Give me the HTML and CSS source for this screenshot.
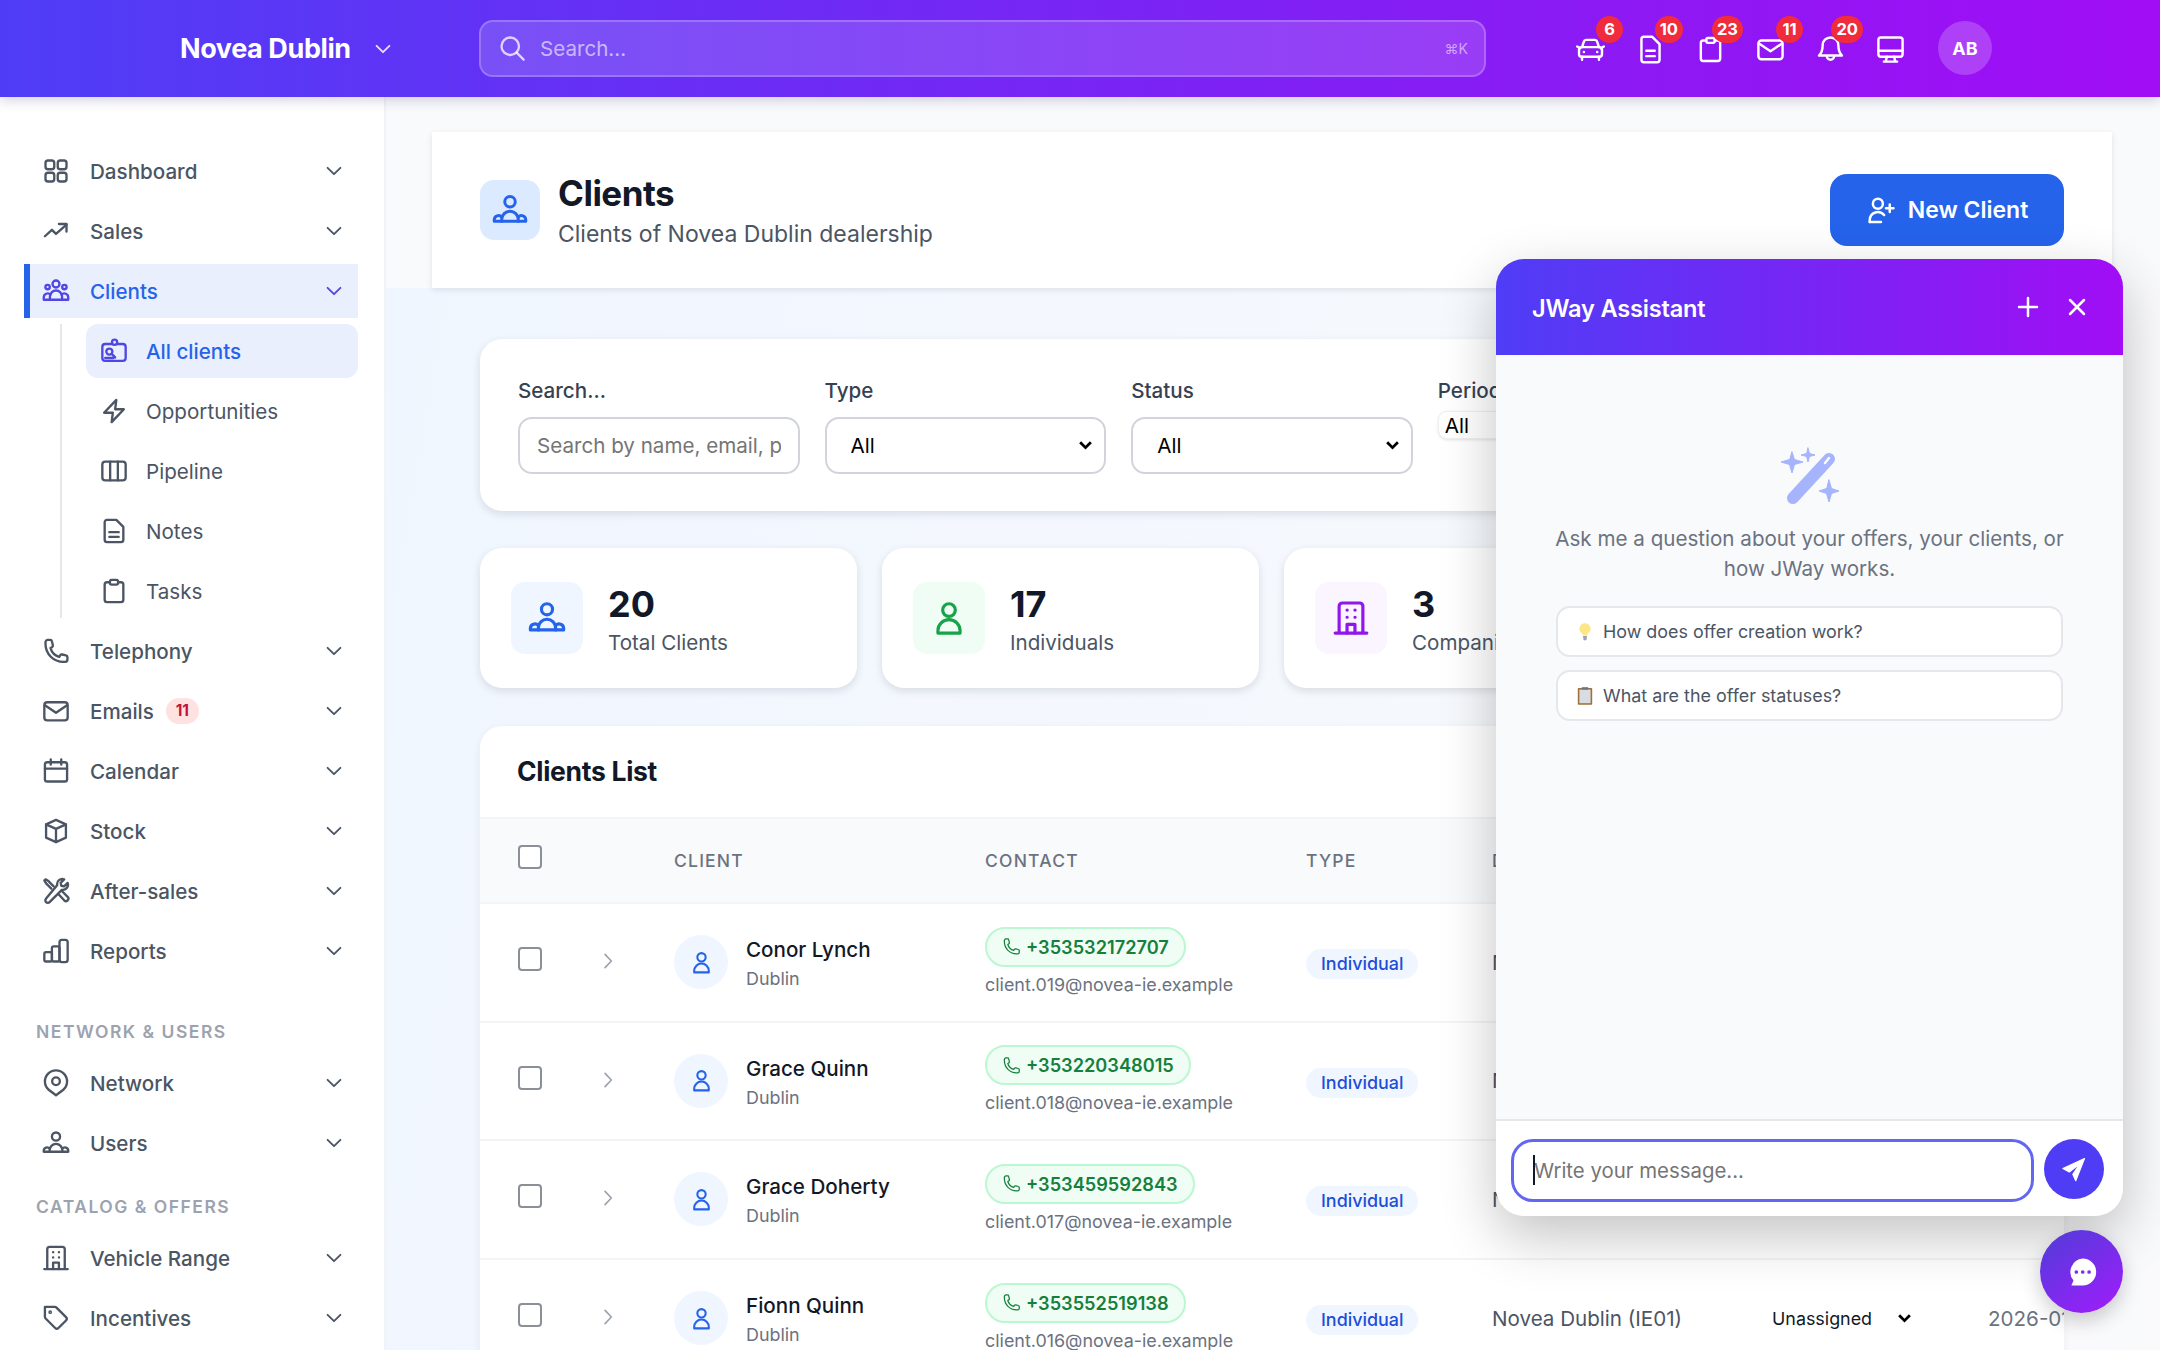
FILE: index.html

```html
<!DOCTYPE html>
<html lang="en">
<head>
    <meta charset="UTF-8">
    <meta name="viewport" content="width=device-width, initial-scale=1.0">
    <title>Clients - Novea Dublin</title>
    <link rel="stylesheet" href="styles.css">
</head>
<body>
    <svg class="sprite" xmlns="http://www.w3.org/2000/svg">
        <symbol id="i-chevron" viewBox="0 0 24 24"><path d="M5 8.500l7 7 7-7"/></symbol>
        <symbol id="i-search" viewBox="0 0 24 24"><circle cx="10.500" cy="10.500" r="7.500"/><path d="M16 16l6 6"/></symbol>
        <symbol id="i-dashboard" viewBox="0 0 24 24"><rect x="3" y="3" width="7.500" height="7.500" rx="2.200"/><rect x="13.500" y="3" width="7.500" height="7.500" rx="2.200"/><rect x="3" y="13.500" width="7.500" height="7.500" rx="2.200"/><rect x="13.500" y="13.500" width="7.500" height="7.500" rx="2.200"/></symbol>
        <symbol id="i-sales" viewBox="0 0 24 24"><path d="M2.500 16.500l6-5.500 3.500 3.500 9-8"/><path d="M14.500 6h6.500v6.500"/></symbol>
        <symbol id="i-clients" viewBox="0 0 24 24"><circle cx="12" cy="6" r="3"/><circle cx="4.800" cy="8.600" r="1.900"/><circle cx="19.200" cy="8.600" r="1.900"/><path d="M6.800 19.500v-2.700a5.200 5.200 0 0 1 10.400 0v2.700z"/><path d="M6.800 19.500H1.500v-2a3.400 3.400 0 0 1 5.800-2.400M17.200 19.500h5.300v-2a3.400 3.400 0 0 0-5.800-2.400"/></symbol>
        <symbol id="i-allclients" viewBox="0 0 24 24"><rect x="2" y="6" width="20" height="14.500" rx="2.500"/><circle cx="12.500" cy="4.500" r="2.200" fill="#e8effc"/><circle cx="8" cy="12.500" r="2.600"/><path d="M10 14.500l3 3M4.500 18h7"/></symbol>
        <symbol id="i-bolt" viewBox="0 0 24 24"><path d="M14 2.500L3.500 13.500H11l-1 8 10.500-11H13z"/></symbol>
        <symbol id="i-pipeline" viewBox="0 0 24 24"><rect x="2" y="4" width="20" height="16" rx="2.500"/><path d="M8.700 4v16M15.300 4v16"/></symbol>
        <symbol id="i-notes" viewBox="0 0 24 24"><path d="M6 2.500h8l6 6v11a2 2 0 0 1-2 2H6a2 2 0 0 1-2-2v-15a2 2 0 0 1 2-2z"/><path d="M8 13h8M8 17h8"/></symbol>
        <symbol id="i-tasks" viewBox="0 0 24 24"><path d="M8.500 4.500H6a2 2 0 0 0-2 2v13a2 2 0 0 0 2 2h12a2 2 0 0 0 2-2v-13a2 2 0 0 0-2-2h-2.500"/><rect x="8.500" y="2.500" width="7" height="4" rx="1.500"/></symbol>
        <symbol id="i-phone" viewBox="0 0 24 24"><path d="M3 4.500A2 2 0 0 1 5 2.500h2a1.500 1.500 0 0 1 1.500 1.200l.8 3.400a1.500 1.500 0 0 1-.7 1.600l-1.300.8a11 11 0 0 0 7.500 7.500l.8-1.300a1.500 1.500 0 0 1 1.600-.7l3.400.8a1.500 1.500 0 0 1 1.200 1.500v2a2 2 0 0 1-2 2h-1C9.800 21.500 3 14.500 3 5.800z"/></symbol>
        <symbol id="i-mail" viewBox="0 0 24 24"><rect x="2" y="4.500" width="20" height="15.500" rx="2.500"/><path d="M2.500 7l9.500 6.500L21.500 7"/></symbol>
        <symbol id="i-calendar" viewBox="0 0 24 24"><rect x="2.500" y="4.500" width="19" height="16.500" rx="2"/><path d="M2.500 10h19M7.500 2v4.500M16.500 2v4.500"/></symbol>
        <symbol id="i-stock" viewBox="0 0 24 24"><path d="M12 2.500l8.500 3.800v11.400L12 21.500l-8.500-3.800V6.300z"/><path d="M3.500 6.300l8.500 3.900 8.500-3.900M12 10.200v11.300"/></symbol>
        <symbol id="i-tools" viewBox="0 0 24 24"><path d="M3.500 20.500a2.100 2.100 0 0 0 3 0L17 10a4.500 4.500 0 0 0 5-6l-3 3-2.500-.5L16 4l3-3a4.500 4.500 0 0 0-6 5L3.500 17.500a2.100 2.100 0 0 0 0 3z" transform="translate(0 1)"/><path d="M10 8L5.500 3.500 3 2 2 3l1.500 2.500L8 10M14 14.500l5 5.500a2 2 0 0 0 3-3l-5-5"/></symbol>
        <symbol id="i-reports" viewBox="0 0 24 24"><rect x="2" y="13" width="6.500" height="8" rx="1.500"/><rect x="8.500" y="8" width="6.500" height="13" rx="1.500"/><rect x="15" y="2.500" width="7" height="19" rx="2"/></symbol>
        <symbol id="i-pin" viewBox="0 0 24 24"><path d="M12 22l-6-4.500A9.500 9.500 0 1 1 18 17.500z" transform="translate(0 .5)"/><circle cx="12" cy="10.500" r="3.300"/></symbol>
        <symbol id="i-users" viewBox="0 0 24 24"><circle cx="12" cy="6.500" r="3.500"/><path d="M6.500 19.500v-1.200a5.500 5.500 0 0 1 11 0v1.200z"/><path d="M6.500 19.500H1.500v-1a2.800 2.800 0 0 1 5-1.700M17.500 19.500h5v-1a2.800 2.800 0 0 0-5-1.700"/></symbol>
        <symbol id="i-building" viewBox="0 0 24 24"><path d="M2 21.500h20M4.500 21.500V4.500a2 2 0 0 1 2-2h11a2 2 0 0 1 2 2v17"/><path d="M9.500 21.500v-5.500h5v5.500M9.500 7h.1M14.500 7h.1M9.500 11.500h.1M14.500 11.500h.1"/></symbol>
        <symbol id="i-tag" viewBox="0 0 24 24"><path d="M3 3h8.500a2 2 0 0 1 1.400.6l8.200 8.200a2 2 0 0 1 0 2.800l-6.500 6.500a2 2 0 0 1-2.800 0L3.600 12.900A2 2 0 0 1 3 11.500V5z" transform="translate(-.5 -.5)"/><circle cx="7" cy="7" r=".6"/></symbol>
        <symbol id="i-car" viewBox="0 0 24 24"><path d="M5 10l1.500-4.500A2 2 0 0 1 8.400 4h7.200a2 2 0 0 1 1.900 1.500L19 10"/><rect x="2.500" y="10" width="19" height="8" rx="2"/><path d="M5 18v2.500M19 18v2.500M1 9.500l2.500 1.500M23 9.500L20.500 11M6.500 14h.1M17.500 14h.1"/></symbol>
        <symbol id="i-doc" viewBox="0 0 24 24"><path d="M7 1.500h7l6 6v13a2 2 0 0 1-2 2H7a2 2 0 0 1-2-2v-17a2 2 0 0 1 2-2z" transform="translate(-.5 0)"/><path d="M8.500 13h7M8.500 17.500h7"/></symbol>
        <symbol id="i-bell" viewBox="0 0 24 24"><path d="M12 2a6.500 6.500 0 0 0-6.500 6.500c0 5-1.500 7-3 8.500h19c-1.500-1.500-3-3.500-3-8.500A6.500 6.500 0 0 0 12 2z"/><path d="M9 17.500a3 3 0 0 0 6 0"/></symbol>
        <symbol id="i-monitor" viewBox="0 0 24 24"><rect x="2" y="2" width="20" height="16" rx="2"/><path d="M2 13h20M9 18l-1 4M15 18l1 4M6.500 22h11"/></symbol>
        <symbol id="i-user" viewBox="0 0 24 24"><circle cx="12" cy="7" r="4"/><path d="M5 21.500v-1.500a7 7 0 0 1 14 0v1.500z"/></symbol>
        <symbol id="i-useradd" viewBox="0 0 24 24"><circle cx="9.500" cy="7" r="4"/><path d="M3 21.500v-1.500a6.500 6.500 0 0 1 11.500-4"/><path d="M3 21.500h9M19 7.500v6M16 10.500h6"/></symbol>
        <symbol id="i-right" viewBox="0 0 24 24"><path d="M8.500 4l7.500 8-7.500 8"/></symbol>
    </svg>

    <header class="topbar">
        <div class="brand">
            <span class="brand-name">Novea Dublin</span>
            <svg class="brand-chevron"><use href="#i-chevron"/></svg>
        </div>
        <div class="top-search">
            <svg class="top-search-icon"><use href="#i-search"/></svg>
            <span class="top-search-text">Search...</span>
            <span class="top-search-key">⌘K</span>
        </div>
        <div class="top-icons">
            <div class="top-icon"><svg><use href="#i-car"/></svg><span class="top-badge">6</span></div>
            <div class="top-icon"><svg><use href="#i-doc"/></svg><span class="top-badge">10</span></div>
            <div class="top-icon"><svg><use href="#i-tasks"/></svg><span class="top-badge">23</span></div>
            <div class="top-icon"><svg><use href="#i-mail"/></svg><span class="top-badge">11</span></div>
            <div class="top-icon"><svg><use href="#i-bell"/></svg><span class="top-badge">20</span></div>
            <div class="top-icon"><svg><use href="#i-monitor"/></svg></div>
        </div>
        <div class="avatar">AB</div>
    </header>

    <div class="layout">
        <aside class="sidebar">
            <a class="nav-item"><svg class="nav-icon"><use href="#i-dashboard"/></svg><span>Dashboard</span><svg class="nav-chevron"><use href="#i-chevron"/></svg></a>
            <a class="nav-item"><svg class="nav-icon"><use href="#i-sales"/></svg><span>Sales</span><svg class="nav-chevron"><use href="#i-chevron"/></svg></a>
            <a class="nav-item active"><svg class="nav-icon"><use href="#i-clients"/></svg><span>Clients</span><svg class="nav-chevron"><use href="#i-chevron"/></svg></a>
            <div class="subnav">
                <a class="sub-item active"><svg class="nav-icon"><use href="#i-allclients"/></svg><span>All clients</span></a>
                <a class="sub-item"><svg class="nav-icon"><use href="#i-bolt"/></svg><span>Opportunities</span></a>
                <a class="sub-item"><svg class="nav-icon"><use href="#i-pipeline"/></svg><span>Pipeline</span></a>
                <a class="sub-item"><svg class="nav-icon"><use href="#i-notes"/></svg><span>Notes</span></a>
                <a class="sub-item"><svg class="nav-icon"><use href="#i-tasks"/></svg><span>Tasks</span></a>
            </div>
            <a class="nav-item"><svg class="nav-icon"><use href="#i-phone"/></svg><span>Telephony</span><svg class="nav-chevron"><use href="#i-chevron"/></svg></a>
            <a class="nav-item"><svg class="nav-icon"><use href="#i-mail"/></svg><span>Emails</span><span class="nav-badge">11</span><svg class="nav-chevron"><use href="#i-chevron"/></svg></a>
            <a class="nav-item"><svg class="nav-icon"><use href="#i-calendar"/></svg><span>Calendar</span><svg class="nav-chevron"><use href="#i-chevron"/></svg></a>
            <a class="nav-item"><svg class="nav-icon"><use href="#i-stock"/></svg><span>Stock</span><svg class="nav-chevron"><use href="#i-chevron"/></svg></a>
            <a class="nav-item"><svg class="nav-icon"><use href="#i-tools"/></svg><span>After-sales</span><svg class="nav-chevron"><use href="#i-chevron"/></svg></a>
            <a class="nav-item"><svg class="nav-icon"><use href="#i-reports"/></svg><span>Reports</span><svg class="nav-chevron"><use href="#i-chevron"/></svg></a>
            <div class="nav-section first">NETWORK &amp; USERS</div>
            <a class="nav-item"><svg class="nav-icon"><use href="#i-pin"/></svg><span>Network</span><svg class="nav-chevron"><use href="#i-chevron"/></svg></a>
            <a class="nav-item"><svg class="nav-icon"><use href="#i-users"/></svg><span>Users</span><svg class="nav-chevron"><use href="#i-chevron"/></svg></a>
            <div class="nav-section">CATALOG &amp; OFFERS</div>
            <a class="nav-item"><svg class="nav-icon"><use href="#i-building"/></svg><span>Vehicle Range</span><svg class="nav-chevron"><use href="#i-chevron"/></svg></a>
            <a class="nav-item"><svg class="nav-icon"><use href="#i-tag"/></svg><span>Incentives</span><svg class="nav-chevron"><use href="#i-chevron"/></svg></a>
        </aside>

        <main class="main">
            <section class="page-head">
                <div class="page-icon"><svg><use href="#i-users"/></svg></div>
                <div class="page-titles">
                    <h1>Clients</h1>
                    <p>Clients of Novea Dublin dealership</p>
                </div>
                <button class="new-btn"><svg><use href="#i-useradd"/></svg>New Client</button>
            </section>

            <div class="content">
                <section class="filters">
                    <div class="field">
                        <label>Search...</label>
                        <input class="field-input" type="text" placeholder="Search by name, email, phone...">
                    </div>
                    <div class="field">
                        <label>Type</label>
                        <select class="field-input"><option>All</option></select>
                    </div>
                    <div class="field">
                        <label>Status</label>
                        <select class="field-input"><option>All</option></select>
                    </div>
                    <div class="field">
                        <label>Period</label>
                        <select class="field-small"><option>All</option></select>
                    </div>
                </section>

                <section class="stats">
                    <div class="stat">
                        <div class="stat-icon blue"><svg><use href="#i-users"/></svg></div>
                        <div><div class="stat-value">20</div><div class="stat-label">Total Clients</div></div>
                    </div>
                    <div class="stat">
                        <div class="stat-icon green"><svg><use href="#i-user"/></svg></div>
                        <div><div class="stat-value">17</div><div class="stat-label">Individuals</div></div>
                    </div>
                    <div class="stat">
                        <div class="stat-icon purple"><svg><use href="#i-building"/></svg></div>
                        <div><div class="stat-value">3</div><div class="stat-label">Companies</div></div>
                    </div>
                </section>

                <section class="list-card">
                    <h2>Clients List</h2>
                    <table class="clients">
                        <colgroup>
                            <col class="c-check"><col class="c-expand"><col class="c-client"><col class="c-contact"><col class="c-type"><col class="c-dealer"><col class="c-owner"><col class="c-date">
                        </colgroup>
                        <thead>
                            <tr>
                                <th><input class="check head-check" type="checkbox"></th>
                                <th></th>
                                <th>CLIENT</th>
                                <th>CONTACT</th>
                                <th>TYPE</th>
                                <th>DEALERSHIP</th>
                                <th>OWNER</th>
                                <th>DATE</th>
                            </tr>
                        </thead>
                        <tbody>
                            <tr>
                                <td><input class="check" type="checkbox"></td>
                                <td><svg class="row-chevron"><use href="#i-right"/></svg></td>
                                <td><div class="client"><div class="client-avatar"><svg><use href="#i-user"/></svg></div><div><div class="client-name">Conor Lynch</div><div class="client-city">Dublin</div></div></div></td>
                                <td><span class="phone"><svg><use href="#i-phone"/></svg>+353532172707</span><div class="email">client.019@novea-ie.example</div></td>
                                <td><span class="type-pill">Individual</span></td>
                                <td class="dealer">Novea Dublin (IE01)</td>
                                <td><select class="owner"><option>Unassigned</option></select></td>
                                <td class="date">2026-01-14</td>
                            </tr>
                            <tr>
                                <td><input class="check" type="checkbox"></td>
                                <td><svg class="row-chevron"><use href="#i-right"/></svg></td>
                                <td><div class="client"><div class="client-avatar"><svg><use href="#i-user"/></svg></div><div><div class="client-name">Grace Quinn</div><div class="client-city">Dublin</div></div></div></td>
                                <td><span class="phone"><svg><use href="#i-phone"/></svg>+353220348015</span><div class="email">client.018@novea-ie.example</div></td>
                                <td><span class="type-pill">Individual</span></td>
                                <td class="dealer">Novea Dublin (IE01)</td>
                                <td><select class="owner"><option>Unassigned</option></select></td>
                                <td class="date">2026-01-14</td>
                            </tr>
                            <tr>
                                <td><input class="check" type="checkbox"></td>
                                <td><svg class="row-chevron"><use href="#i-right"/></svg></td>
                                <td><div class="client"><div class="client-avatar"><svg><use href="#i-user"/></svg></div><div><div class="client-name">Grace Doherty</div><div class="client-city">Dublin</div></div></div></td>
                                <td><span class="phone"><svg><use href="#i-phone"/></svg>+353459592843</span><div class="email">client.017@novea-ie.example</div></td>
                                <td><span class="type-pill">Individual</span></td>
                                <td class="dealer">Novea Dublin (IE01)</td>
                                <td><select class="owner"><option>Unassigned</option></select></td>
                                <td class="date">2026-01-14</td>
                            </tr>
                            <tr>
                                <td><input class="check" type="checkbox"></td>
                                <td><svg class="row-chevron"><use href="#i-right"/></svg></td>
                                <td><div class="client"><div class="client-avatar"><svg><use href="#i-user"/></svg></div><div><div class="client-name">Fionn Quinn</div><div class="client-city">Dublin</div></div></div></td>
                                <td><span class="phone"><svg><use href="#i-phone"/></svg>+353552519138</span><div class="email">client.016@novea-ie.example</div></td>
                                <td><span class="type-pill">Individual</span></td>
                                <td class="dealer">Novea Dublin (IE01)</td>
                                <td><select class="owner"><option>Unassigned</option></select></td>
                                <td class="date">2026-01-14</td>
                            </tr>
                        </tbody>
                    </table>
                </section>
            </div>
        </main>
    </div>

    <!-- assistant panel, sits over the page -->
    <section class="assistant">
        <div class="assistant-head">
            <span class="assistant-title">JWay Assistant</span>
            <svg class="assistant-btn" viewBox="0 0 24 24"><path d="M12 3v18M3 12h18"/></svg>
            <svg class="assistant-btn close" viewBox="0 0 24 24"><path d="M5 5l14 14M19 5L5 19"/></svg>
        </div>
        <div class="assistant-body">
            <svg class="wand" viewBox="0 0 60 60">
                <line class="wand-stick" x1="13" y1="51" x2="49" y2="12"/>
                <line class="wand-slot" x1="49" y1="11" x2="45" y2="16"/>
                <path class="wand-star" d="M12 5L14.500 12.500L23 15L14.500 17.500L12 26L9.500 17.500L1 15L9.500 12.500Z"/>
                <path class="wand-star" d="M28 1L29.500 6.500L35 8L29.500 9.500L28 15L26.500 9.500L21 8L26.500 6.500Z"/>
                <path class="wand-star" d="M49 33L51.500 41.500L59 44L51.500 46.500L49 55L46.500 46.500L39 44L46.500 41.500Z"/>
            </svg>
            <p class="assistant-intro">Ask me a question about your offers, your clients, or how JWay works.</p>
            <button class="suggest">
                <svg viewBox="0 0 20 24"><path d="M10 1a7 7 0 0 0-4 12.700c.8.700 1.200 1.500 1.300 2.800h5.400c.1-1.300.5-2.100 1.300-2.800A7 7 0 0 0 10 1z" fill="#fde68a"/><path d="M7.500 17h5l-.5 4-2 2-2-2z" fill="#9ca3af"/></svg>
                How does offer creation work?
            </button>
            <button class="suggest">
                <svg viewBox="0 0 20 24"><rect x="1" y="2" width="18" height="21" rx="1" fill="#a0703c"/><rect x="3" y="4" width="14" height="17" fill="#d9dde2"/><rect x="6" y="1" width="8" height="3" fill="#6b7280"/></svg>
                What are the offer statuses?
            </button>
        </div>
        <div class="assistant-foot">
            <div class="message-box">
                <span class="message-caret"></span>
                <input class="message-input" type="text" placeholder="Write your message...">
            </div>
            <button class="send-btn">
                <svg viewBox="0 0 24 24"><path d="M21 3L2.500 11.500l5.500 3 9-7-6 9 2.500 5.500z"/></svg>
            </button>
        </div>
    </section>

    <button class="chat-fab">
        <svg viewBox="0 0 24 24"><path d="M12.500 2.500a9.500 9.500 0 0 1 0 19H4.500l1.500-3.500a9.500 9.500 0 0 1 6.500-15.500z"/><circle class="dot" cx="8" cy="12" r="1.300"/><circle class="dot" cx="12.500" cy="12" r="1.300"/><circle class="dot" cx="17" cy="12" r="1.300"/></svg>
    </button>
</body>
</html>
```

FILE: styles.css

```css
* {
    box-sizing: border-box;
}
html, body {
    margin: 0;
    height: 1350px;
    overflow: hidden;
}
body {
    font-family: 'Inter', 'Liberation Sans', sans-serif;
    font-size: 20.6px;
    color: #111827;
    background-color: #f9fafb;
    position: relative;
}
svg {
    fill: none;
    stroke: currentColor;
    stroke-width: 2;
    stroke-linecap: round;
    stroke-linejoin: round;
}
.sprite {
    position: absolute;
    width: 0;
    height: 0;
}
button {
    font-family: inherit;
    border: none;
    cursor: pointer;
}

/* top bar */
.topbar {
    height: 97px;
    display: flex;
    align-items: center;
    background: linear-gradient(90deg, #4f3df6 0%, #a10df4 100%);
    box-shadow: 0 3px 12px rgba(30, 20, 90, 0.2);
    position: relative;
    z-index: 5;
    color: #fff;
}
.brand {
    width: 479px;
    padding-left: 180px;
    display: flex;
    align-items: center;
}
.brand-name {
    font-size: 27px;
    font-weight: 700;
    letter-spacing: -0.4px;
}
.brand-chevron {
    width: 22px;
    height: 22px;
    margin-left: 21px;
    color: rgba(255, 255, 255, 0.85);
}
.top-search {
    width: 1007px;
    height: 57px;
    display: flex;
    align-items: center;
    padding: 0 16px 1px 17px;
    border: 2px solid rgba(255, 255, 255, 0.22);
    border-radius: 14px;
    background-color: rgba(255, 255, 255, 0.15);
}
.top-search-icon {
    width: 28px;
    height: 28px;
    color: rgba(255, 255, 255, 0.75);
}
.top-search-text {
    margin-left: 14px;
    color: rgba(255, 255, 255, 0.6);
}
.top-search-key {
    margin-left: auto;
    font-size: 14px;
    color: rgba(255, 255, 255, 0.55);
}
.top-icons {
    display: flex;
    margin-left: 74px;
}
.top-icon {
    width: 60px;
    height: 60px;
    display: flex;
    align-items: center;
    justify-content: center;
    position: relative;
}
.top-icon svg {
    width: 29px;
    height: 29px;
    margin-top: 2px;
}
.top-badge {
    position: absolute;
    top: -3px;
    right: -3px;
    min-width: 27px;
    height: 27px;
    padding: 0 5px;
    border-radius: 14px;
    background-color: #ef2b3d;
    font-size: 16.5px;
    font-weight: 700;
    line-height: 27px;
    text-align: center;
}
.avatar {
    width: 54px;
    height: 54px;
    margin-left: 18px;
    margin-top: -1px;
    border-radius: 50%;
    background-color: rgba(255, 255, 255, 0.2);
    display: flex;
    align-items: center;
    justify-content: center;
    font-size: 18px;
    font-weight: 700;
}

.layout {
    display: flex;
    height: 1253px;
}

/* sidebar */
.sidebar {
    width: 386px;
    flex-shrink: 0;
    padding: 47px 26px 0 24px;
    background-color: #fff;
    border-right: 2px solid #f1f3f6;
    color: #4b5563;
}
.nav-item {
    height: 54px;
    margin-bottom: 6px;
    padding: 0 13px 0 18px;
    display: flex;
    align-items: center;
    font-weight: 500;
}
.nav-icon {
    width: 28px;
    height: 28px;
    flex-shrink: 0;
    margin-right: 20px;
}
.nav-chevron {
    width: 22px;
    height: 22px;
    margin-left: auto;
}
.nav-item.active {
    padding-left: 12px;
    border-left: 6px solid #2563eb;
    background-color: #e9effc;
    color: #2563eb;
}
.nav-item.active .nav-icon,
.nav-item.active .nav-chevron,
.sub-item.active .nav-icon {
    color: #4f46e5;
}
.nav-badge {
    margin-left: 12px;
    width: 33px;
    height: 26px;
    border-radius: 13px;
    background-color: #fee2e2;
    color: #be123c;
    font-size: 15.5px;
    font-weight: 700;
    line-height: 26px;
    text-align: center;
}
.subnav {
    margin-left: 36px;
    padding-left: 24px;
    border-left: 2px solid #e5e7eb;
    margin-bottom: 6px;
}
.sub-item {
    height: 54px;
    margin-bottom: 6px;
    padding-left: 14px;
    display: flex;
    align-items: center;
    border-radius: 12px;
}
.sub-item:last-child {
    margin-bottom: 0;
}
.sub-item .nav-icon {
    margin-right: 18px;
}
.sub-item.active {
    background-color: #e9effc;
    color: #2563eb;
    font-weight: 500;
}
.nav-section {
    height: 22px;
    margin: 26px 0 13px 12px;
    font-size: 17.5px;
    font-weight: 600;
    letter-spacing: 1.500px;
    color: #9ca3af;
    line-height: 22px;
}
.nav-section.first {
    margin-top: 43px;
}

/* page */
.main {
    flex: 1;
    min-width: 0;
    padding-top: 35px;
}
.page-head {
    height: 156px;
    margin: 0 48px 0 46px;
    padding: 0 48px;
    display: flex;
    align-items: center;
    background-color: #fff;
    box-shadow: 0 2px 6px rgba(17, 24, 39, 0.1);
    position: relative;
}
.page-icon {
    width: 60px;
    height: 60px;
    border-radius: 14px;
    background-color: #dbeafe;
    color: #2563eb;
    display: flex;
    align-items: center;
    justify-content: center;
}
.page-icon svg {
    width: 36px;
    height: 36px;
}
.page-titles {
    margin-left: 18px;
}
.page-titles h1 {
    margin: 0;
    font-size: 35px;
    font-weight: 700;
    letter-spacing: -0.5px;
    line-height: 44px;
}
.page-titles p {
    margin: 3px 0 0;
    font-size: 23px;
    color: #4b5563;
    line-height: 32px;
}
.new-btn {
    margin-left: auto;
    width: 234px;
    height: 72px;
    border-radius: 17px;
    background-color: #2563eb;
    color: #fff;
    font-size: 23px;
    font-weight: 600;
    display: flex;
    align-items: center;
    justify-content: center;
}
.new-btn svg {
    width: 30px;
    height: 30px;
    margin-right: 12px;
}
.content {
    padding: 51px 96px 0 94px;
    background: linear-gradient(100deg, #f0f6ff 0%, #fafafb 100%);
    height: 1100px;
}

.filters {
    height: 172px;
    padding: 37px 38px 0;
    display: grid;
    grid-template-columns: repeat(4, 281.6px);
    column-gap: 25px;
    background-color: #fff;
    border-radius: 22px;
    box-shadow: 0 3px 8px rgba(17, 24, 39, 0.12);
}
.field label {
    display: block;
    height: 41px;
    color: #374151;
    font-weight: 500;
    line-height: 29px;
}
.field-input {
    width: 100%;
    height: 57px;
    padding: 0 17px;
    border: 2px solid #d1d5db;
    border-radius: 14px;
    background-color: #fff;
    font-family: inherit;
    font-size: 20.6px;
    color: #000;
}
select.field-input {
    appearance: none;
    padding-left: 24px;
    background-image: url("data:image/svg+xml,%3Csvg xmlns='http://www.w3.org/2000/svg' viewBox='0 0 14 10'%3E%3Cpath d='M2 2l5 5 5-5' fill='none' stroke='%23000' stroke-width='2.6'/%3E%3C/svg%3E");
    background-repeat: no-repeat;
    background-position: right 11px center;
    background-size: 15px 11px;
}
.field-small {
    appearance: none;
    width: 100%;
    height: 28px;
    margin-top: -6px;
    padding: 0 6px;
    border: 1px solid #f0f0f2;
    border-radius: 9px;
    background-color: #fff;
    box-shadow: 0 1px 3px rgba(17, 24, 39, 0.12);
    font-family: inherit;
    font-size: 20.6px;
    color: #000;
    display: block;
}

.stats {
    margin-top: 37px;
    display: grid;
    grid-template-columns: repeat(4, 377px);
    column-gap: 25px;
}
.stat {
    height: 140px;
    padding: 0 31px;
    display: flex;
    align-items: center;
    background-color: #fff;
    border-radius: 22px;
    box-shadow: 0 3px 8px rgba(17, 24, 39, 0.12);
}
.stat-icon {
    width: 72px;
    height: 72px;
    margin-right: 25px;
    border-radius: 14px;
    display: flex;
    align-items: center;
    justify-content: center;
}
.stat-icon svg {
    width: 38px;
    height: 38px;
}
.stat-icon.blue {
    background-color: #eff6ff;
    color: #2563eb;
}
.stat-icon.green {
    background-color: #f0fdf4;
    color: #16a34a;
}
.stat-icon.purple {
    background-color: #faf5ff;
    color: #9216ea;
}
.stat-value {
    font-size: 36px;
    font-weight: 700;
    line-height: 44px;
    padding-top: 2px;
}
.stat-label {
    margin-top: 3px;
    color: #4b5563;
    line-height: 28px;
    white-space: nowrap;
}

.list-card {
    margin-top: 38px;
    background-color: #fff;
    border-radius: 22px 22px 0 0;
    box-shadow: 0 2px 8px rgba(17, 24, 39, 0.06);
    overflow: hidden;
}
.list-card h2 {
    margin: 0;
    height: 91px;
    padding-left: 37px;
    font-size: 26.5px;
    font-weight: 700;
    letter-spacing: -0.3px;
    line-height: 90px;
}
.clients {
    width: 1584px;
    table-layout: fixed;
    border-collapse: collapse;
}
.c-check { width: 118px; }
.c-expand { width: 76px; }
.c-client { width: 311px; }
.c-contact { width: 321px; }
.c-type { width: 186px; }
.c-dealer { width: 280px; }
.c-owner { width: 216px; }
.c-date { width: 76px; }
.clients th {
    height: 85px;
    padding: 0;
    background-color: #f9fafb;
    border-top: 2px solid #f3f4f6;
    border-bottom: 2px solid #f3f4f6;
    font-size: 17.5px;
    font-weight: 500;
    letter-spacing: 1.200px;
    color: #6b7280;
    text-align: left;
    white-space: nowrap;
    overflow: hidden;
}
.clients td {
    height: 118.6px;
    padding: 0;
    border-bottom: 2px solid #f3f4f6;
    white-space: nowrap;
    overflow: hidden;
}
.clients th:first-child,
.clients td:first-child {
    padding-left: 38px;
}
.check {
    appearance: none;
    display: block;
    width: 24px;
    height: 24px;
    margin: -6px 0 0;
    border: 2px solid #8a8f98;
    border-radius: 4px;
    background-color: #fff;
}
.head-check {
    margin-top: -7px;
}
.row-chevron {
    display: block;
    width: 20px;
    height: 24px;
    margin-top: -2px;
    color: #9ca3af;
}
.client {
    display: flex;
    align-items: center;
}
.client-avatar {
    width: 54px;
    height: 54px;
    margin-right: 18px;
    border-radius: 50%;
    background-color: #eff6ff;
    color: #2563eb;
    display: flex;
    align-items: center;
    justify-content: center;
}
.client-avatar svg {
    width: 25px;
    height: 25px;
}
.client-name {
    font-weight: 500;
    line-height: 28px;
    padding-top: 3px;
}
.client-city {
    margin-top: 3px;
    font-size: 17.9px;
    color: #6b7280;
    line-height: 24px;
}
.phone {
    display: inline-flex;
    align-items: center;
    height: 40px;
    padding: 0 15px;
    border: 2px solid #bbf7d0;
    border-radius: 20px;
    background-color: #f0fdf4;
    color: #15803d;
    font-size: 18.2px;
    font-weight: 600;
}
.phone svg {
    width: 19px;
    height: 19px;
    margin-right: 5px;
    stroke-width: 1.600;
}
.email {
    margin-top: 5px;
    font-size: 17.9px;
    color: #6b7280;
    line-height: 26px;
}
.type-pill {
    display: inline-block;
    height: 30px;
    margin-top: 4px;
    padding: 0 15px;
    border-radius: 15px;
    background-color: #eff6ff;
    color: #1d4ed8;
    font-size: 17.9px;
    font-weight: 500;
    line-height: 30px;
}
.dealer {
    color: #4b5563;
}
.owner {
    appearance: none;
    width: 160px;
    height: 34px;
    padding: 0;
    border: none;
    background-color: transparent;
    background-image: url("data:image/svg+xml,%3Csvg xmlns='http://www.w3.org/2000/svg' viewBox='0 0 14 10'%3E%3Cpath d='M2 2l5 5 5-5' fill='none' stroke='%23000' stroke-width='2.6'/%3E%3C/svg%3E");
    background-repeat: no-repeat;
    background-position: right 20px center;
    background-size: 15px 11px;
    font-family: inherit;
    font-size: 17.9px;
    color: #111827;
}
.date {
    color: #6b7280;
}

/* assistant */
.assistant {
    position: absolute;
    left: 1496px;
    top: 259px;
    width: 627px;
    height: 957px;
    display: flex;
    flex-direction: column;
    border-radius: 28px;
    background-color: #f9fafb;
    box-shadow: 0 20px 55px rgba(0, 0, 0, 0.24);
    overflow: hidden;
    z-index: 6;
}
.assistant-head {
    height: 96px;
    flex-shrink: 0;
    padding: 0 34px 0 36px;
    display: flex;
    align-items: center;
    background: linear-gradient(90deg, #4f3df6 0%, #a10df4 100%);
    color: #fff;
}
.assistant-title {
    font-size: 23.6px;
    font-weight: 600;
    letter-spacing: -0.2px;
    margin-right: auto;
    padding-top: 2px;
}
.assistant-btn {
    width: 24px;
    height: 24px;
    stroke-width: 2.500;
}
.assistant-btn.close {
    margin-left: 25px;
}
.assistant-body {
    flex: 1;
    padding: 92px 60px 0;
    display: flex;
    flex-direction: column;
    align-items: center;
}
.wand {
    width: 60px;
    height: 60px;
}
.wand-stick {
    stroke: #a5b4fc;
    stroke-width: 12;
}
.wand-slot {
    stroke: #f9fafb;
    stroke-width: 2.500;
}
.wand-star {
    fill: #a5b4fc;
    stroke: #a5b4fc;
    stroke-width: 1;
}
.assistant-intro {
    margin: 17px -8px 23px;
    color: #6b7280;
    line-height: 29.6px;
    text-align: center;
}
.suggest {
    width: 100%;
    height: 51px;
    margin-bottom: 13px;
    padding: 0 19px;
    display: flex;
    align-items: center;
    border: 2px solid #e5e7eb;
    border-radius: 14px;
    background-color: #fff;
    font-size: 17.9px;
    color: #4b5563;
}
.suggest svg {
    width: 16px;
    height: 20px;
    margin-right: 10px;
    stroke: none;
}
.assistant-foot {
    height: 97px;
    flex-shrink: 0;
    padding: 18px 19px 0 15px;
    display: flex;
    gap: 10px;
    background-color: #fff;
    border-top: 2px solid #e5e7eb;
}
.message-box {
    flex: 1;
    height: 63px;
    position: relative;
}
.message-input {
    width: 100%;
    height: 100%;
    padding: 0 20px;
    border: 3px solid #6366f1;
    border-radius: 22px;
    outline: none;
    font-family: inherit;
    font-size: 20.4px;
    caret-color: transparent;
}
.message-caret {
    position: absolute;
    left: 22px;
    top: 16px;
    width: 1.500px;
    height: 30px;
    background-color: #111827;
    z-index: 1;
}
.send-btn {
    width: 60px;
    height: 60px;
    padding: 0;
    border-radius: 50%;
    background-color: #4f3df6;
    display: flex;
    align-items: center;
    justify-content: center;
}
.send-btn svg {
    width: 28px;
    height: 28px;
    fill: #fff;
    stroke: #fff;
    stroke-width: 1;
}
.chat-fab {
    position: absolute;
    left: 2040px;
    top: 1230px;
    width: 83px;
    height: 83px;
    padding: 0;
    border-radius: 50%;
    background: linear-gradient(145deg, #4f3dd8 0%, #a21cfc 100%);
    box-shadow: 0 8px 20px rgba(0, 0, 0, 0.2);
    display: flex;
    align-items: center;
    justify-content: center;
    z-index: 7;
}
.chat-fab svg {
    width: 34px;
    height: 34px;
    fill: #fff;
    stroke: none;
}
.chat-fab .dot {
    fill: #7c2ee8;
}
```
